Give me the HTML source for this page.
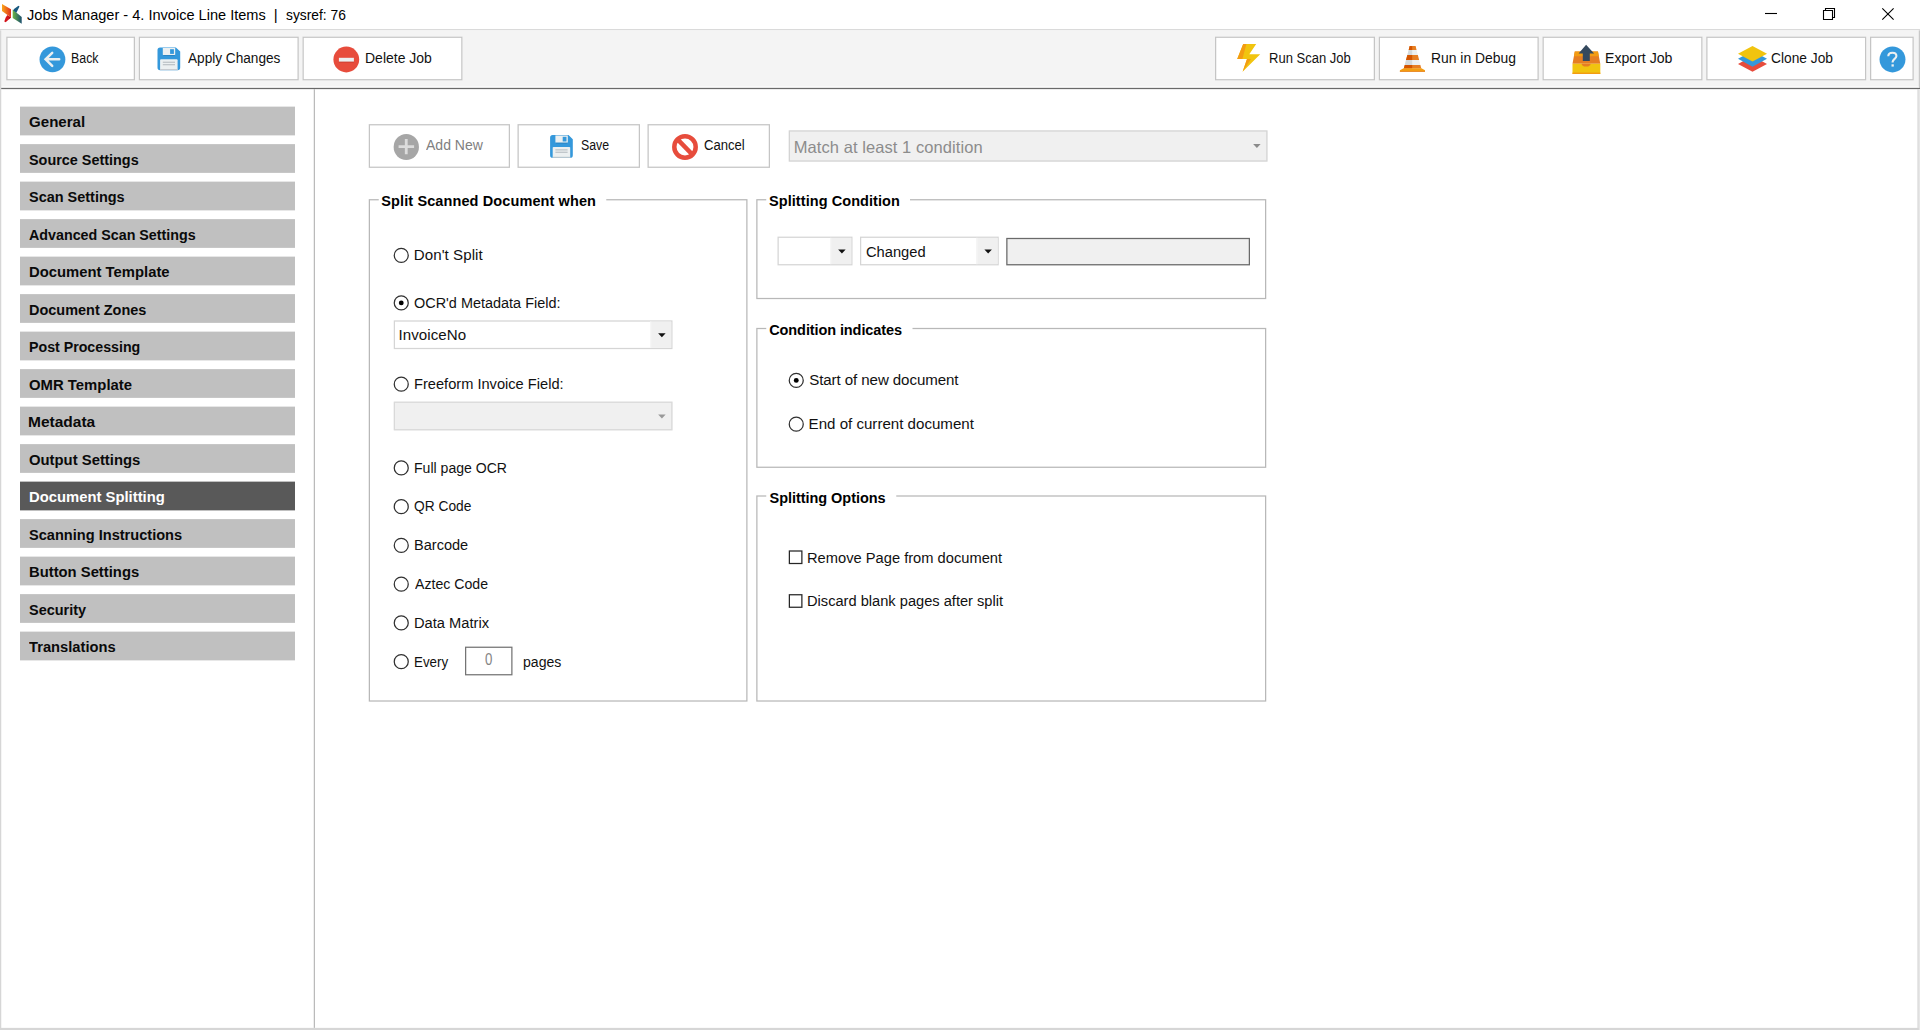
<!DOCTYPE html>
<html lang="en">
<head>
<meta charset="utf-8">
<title>Jobs Manager - 4. Invoice Line Items | sysref: 76</title>
<style>
html,body{margin:0;padding:0;}
body{width:1920px;height:1030px;position:relative;overflow:hidden;background:#fff;font-family:"Liberation Sans",sans-serif;}
#client{position:absolute;left:0;top:0;width:1536px;height:800px;transform:translate(0px,30.375px) scale(1.25);transform-origin:0 0;background:#fff;}
.a{position:absolute;box-sizing:border-box;}
.t{position:absolute;white-space:pre;display:block;transform-origin:0 50%;}
.btn{position:absolute;box-sizing:border-box;background:#fff;border:1px solid #c5c5c5;}
.gb{position:absolute;box-sizing:border-box;border:1px solid #b8b8b8;}
svg{position:absolute;overflow:visible;}
</style>
</head>
<body>
<div class="a" style="left:0;top:29px;width:1920px;height:2px;background:#dadada"></div>
<div id="client">
<div class="a" style="left:0px;top:0px;width:1535px;height:45px;background:#f4f4f4"></div>
<div class="a" style="left:1535px;top:0px;width:1px;height:46px;background:#c8c8c8"></div>
<div class="a" style="left:0px;top:45px;width:1535px;height:1px;background:#fafafa"></div>
<div class="a" style="left:0px;top:46px;width:1536px;height:1px;background:#696969"></div>
<div class="a" style="left:0px;top:0px;width:1px;height:800px;background:#d6d6d6"></div>
<div class="a" style="left:1534px;top:47px;width:1px;height:753px;background:#d2d2d2"></div>
<div class="a" style="left:1535px;top:47px;width:1px;height:753px;background:#e6e6e6"></div>
<div class="a" style="left:0px;top:798px;width:1535px;height:2px;background:#d6d6d6"></div>
<div class="a" style="left:251px;top:47px;width:1px;height:751px;background:#bababa"></div>
<div class="btn" style="left:5px;top:5px;width:103px;height:35px;"></div>
<div class="btn" style="left:111px;top:5px;width:128px;height:35px;"></div>
<div class="btn" style="left:242px;top:5px;width:128px;height:35px;"></div>
<div class="btn" style="left:972px;top:5px;width:128px;height:35px;"></div>
<div class="btn" style="left:1103px;top:5px;width:128px;height:35px;"></div>
<div class="btn" style="left:1234px;top:5px;width:128px;height:35px;"></div>
<div class="btn" style="left:1365px;top:5px;width:128px;height:35px;"></div>
<div class="btn" style="left:1496px;top:5px;width:35px;height:35px;"></div>
<div class="a" style="left:16px;top:61px;width:220px;height:23px;background:#c0c0c0"></div>
<div class="a" style="left:16px;top:91px;width:220px;height:23px;background:#c0c0c0"></div>
<div class="a" style="left:16px;top:121px;width:220px;height:23px;background:#c0c0c0"></div>
<div class="a" style="left:16px;top:151px;width:220px;height:23px;background:#c0c0c0"></div>
<div class="a" style="left:16px;top:181px;width:220px;height:23px;background:#c0c0c0"></div>
<div class="a" style="left:16px;top:211px;width:220px;height:23px;background:#c0c0c0"></div>
<div class="a" style="left:16px;top:241px;width:220px;height:23px;background:#c0c0c0"></div>
<div class="a" style="left:16px;top:271px;width:220px;height:23px;background:#c0c0c0"></div>
<div class="a" style="left:16px;top:301px;width:220px;height:23px;background:#c0c0c0"></div>
<div class="a" style="left:16px;top:331px;width:220px;height:23px;background:#c0c0c0"></div>
<div class="a" style="left:16px;top:361px;width:220px;height:23px;background:#595959"></div>
<div class="a" style="left:16px;top:391px;width:220px;height:23px;background:#c0c0c0"></div>
<div class="a" style="left:16px;top:421px;width:220px;height:23px;background:#c0c0c0"></div>
<div class="a" style="left:16px;top:451px;width:220px;height:23px;background:#c0c0c0"></div>
<div class="a" style="left:16px;top:481px;width:220px;height:23px;background:#c0c0c0"></div>
<div class="btn" style="left:295px;top:75px;width:113px;height:35px;"></div>
<div class="btn" style="left:414px;top:75px;width:98px;height:35px;"></div>
<div class="btn" style="left:518px;top:75px;width:98px;height:35px;"></div>
<div class="a" style="left:631px;top:80px;width:383px;height:25px;background:#f0f0f0;border:1px solid #d4d4d4"></div>
<div class="gb" style="left:295px;top:135px;width:303px;height:402px;"></div>
<div class="a" style="left:303px;top:134px;width:182px;height:3px;background:#fff"></div>
<div class="gb" style="left:605px;top:135px;width:408px;height:80px;"></div>
<div class="a" style="left:613px;top:134px;width:115px;height:3px;background:#fff"></div>
<div class="gb" style="left:605px;top:238px;width:408px;height:112px;"></div>
<div class="a" style="left:613px;top:237px;width:117px;height:3px;background:#fff"></div>
<div class="gb" style="left:605px;top:372px;width:408px;height:165px;"></div>
<div class="a" style="left:613px;top:371px;width:104px;height:3px;background:#fff"></div>
<div class="a" style="left:315px;top:232px;width:223px;height:23px;background:#fff;border:1px solid #d5d5d5"></div>
<div class="a" style="left:520px;top:233px;width:17px;height:21px;background:#f0f0f0;border-left:1px solid #f6f6f6"></div>
<div class="a" style="left:315px;top:297px;width:223px;height:23px;background:#f0f0f0;border:1px solid #d9d9d9"></div>
<div class="a" style="left:622px;top:165px;width:60px;height:23px;background:#fff;border:1px solid #d5d5d5"></div>
<div class="a" style="left:664px;top:166px;width:17px;height:21px;background:#f0f0f0;border-left:1px solid #f6f6f6"></div>
<div class="a" style="left:688px;top:165px;width:111px;height:23px;background:#fff;border:1px solid #d5d5d5"></div>
<div class="a" style="left:781px;top:166px;width:17px;height:21px;background:#f0f0f0;border-left:1px solid #f6f6f6"></div>
<div class="a" style="left:805px;top:166px;width:195px;height:22px;background:#f0f0f0;border:1px solid #6a6a6a"></div>
<div class="a" style="left:372px;top:493px;width:38px;height:23px;background:#fff;border:1px solid #747474"></div>
<svg style="left:0;top:0" width="1536" height="800" viewBox="0 0 1536 800" fill="#fff" stroke="#303030" stroke-width="1"><circle cx="321" cy="180" r="5.6"/><circle cx="321" cy="218" r="5.6"/><circle cx="321" cy="283" r="5.6"/><circle cx="321" cy="350" r="5.6"/><circle cx="321" cy="381" r="5.6"/><circle cx="321" cy="412" r="5.6"/><circle cx="321" cy="443" r="5.6"/><circle cx="321" cy="474" r="5.6"/><circle cx="321" cy="505" r="5.6"/><circle cx="637" cy="280" r="5.6"/><circle cx="637" cy="315" r="5.6"/><circle cx="321" cy="218" r="1.950" fill="#000" stroke="none"/><circle cx="637" cy="280" r="1.950" fill="#000" stroke="none"/><rect x="631.5" y="416.5" width="10" height="10" stroke="#262626"/><rect x="631.5" y="451.5" width="10" height="10" stroke="#262626"/><polygon points="526.5,242.2 532.5,242.2 529.5,245.4" fill="#111" stroke="none"/><polygon points="526.5,307.2 532.5,307.2 529.5,310.4" fill="#999" stroke="none"/><polygon points="670.5,175.2 676.5,175.2 673.5,178.4" fill="#111" stroke="none"/><polygon points="787.5,175.2 793.5,175.2 790.5,178.4" fill="#111" stroke="none"/><polygon points="1002.5,90.8 1008.5,90.8 1005.5,94.0" fill="#8b8b8b" stroke="none"/></svg>
</div>

<!-- app logo -->
<svg style="left:0;top:0" width="30" height="30" viewBox="0 0 30 30">
<defs>
<linearGradient id="lg1" x1="0" y1="0" x2="1" y2="0"><stop offset="0" stop-color="#faa61a"/><stop offset="1" stop-color="#e0301e"/></linearGradient>
<linearGradient id="lg2" x1="0" y1="0" x2="1" y2="0"><stop offset="0" stop-color="#6db544"/><stop offset="1" stop-color="#1b4f6e"/></linearGradient>
</defs>
<polygon points="7.300,15 11,17.500 5.700,22.200 4.300,21.600 5.600,17.800" fill="#d3131b"/>
<polygon points="8.600,16 11,17.500 9.400,18.900" fill="#a50f15"/>
<polygon points="2,4 11,9.300 11,17.600 2,10.900" fill="url(#lg1)"/>
<polygon points="12.7,9.6 21.7,17.1 21.7,23.8 12.7,18.1" fill="url(#lg2)"/>
<polygon points="18.5,5.7 19.5,6.4 16.4,12.8 13.2,10.5 14,8.9" fill="#17587f"/>
</svg>

<!-- caption buttons -->
<svg style="left:1740px;top:0" width="180" height="29" viewBox="1740 0 180 29" fill="none" stroke="#000" stroke-width="1.1">
<path d="M1765 13.5H1777"/>
<path d="M1823.5 10.5h9v9h-9zM1825.5 10.5v-2h9v9h-2"/>
<path d="M1882.300 8.300L1893.600 19.600M1893.600 8.300L1882.300 19.600"/>
</svg>

<!-- toolbar icons -->
<!-- back -->
<svg style="left:38px;top:44px" width="30" height="30" viewBox="38 44 30 30">
<circle cx="52.45" cy="59.45" r="12.9" fill="#3498db"/>
<path d="M59.200 59.350H46.200M52.200 52.900L45.600 59.350L52.200 65.800" fill="none" stroke="#ecf0f1" stroke-width="2.500" stroke-linecap="round" stroke-linejoin="miter"/>
</svg>
<!-- floppy (apply) -->
<svg style="left:157px;top:47px" width="24" height="24" viewBox="0 0 24 24"><use href="#floppy" x="0.500" y="0.500"/></svg>
<!-- delete -->
<svg style="left:331px;top:44px" width="30" height="30" viewBox="331 44 30 30">
<circle cx="346.300" cy="59.500" r="12.900" fill="#e74c3c"/>
<rect x="338.900" y="61.300" width="15" height="1.100" fill="#c0392b"/>
<rect x="338.900" y="57.800" width="15" height="3.800" fill="#ecf0f1"/>
</svg>
<!-- lightning -->
<svg style="left:1235px;top:42px" width="28" height="32" viewBox="1235 42 28 32">
<polygon points="1243.200,44 1256.200,44 1249.300,54.200 1260.200,54.200 1242.600,71.700 1247,59 1237.200,59" fill="#f1c40f"/>
<polygon points="1243.200,44 1246.400,44 1242.400,59 1237.200,59" fill="#f39c12"/>
<polygon points="1247,59 1251,59 1242.600,71.700" fill="#f39c12"/>
</svg>
<!-- cone -->
<svg style="left:1398px;top:44px" width="30" height="30" viewBox="1398 44 30 30">
<polygon points="1409.70,46.10 1415.60,46.10 1416.59,50.00 1408.68,50.00" fill="#e67e22"/>
<polygon points="1409.70,46.10 1412.20,46.10 1412.20,50.00 1408.68,50.00" fill="#d35400"/>
<polygon points="1408.68,50.00 1416.59,50.00 1417.85,55.00 1407.37,55.00" fill="#ecf0f1"/>
<polygon points="1408.68,50.00 1412.20,50.00 1412.20,55.00 1407.37,55.00" fill="#d3d9db"/>
<polygon points="1407.37,55.00 1417.85,55.00 1419.15,60.10 1406.03,60.10" fill="#e67e22"/>
<polygon points="1407.37,55.00 1412.20,55.00 1412.20,60.10 1406.03,60.10" fill="#d35400"/>
<polygon points="1406.03,60.10 1419.15,60.10 1420.36,64.90 1404.77,64.90" fill="#ecf0f1"/>
<polygon points="1406.03,60.10 1412.20,60.10 1412.20,64.90 1404.77,64.90" fill="#d3d9db"/>
<polygon points="1404.77,64.90 1420.36,64.90 1421.30,68.60 1403.80,68.60" fill="#e67e22"/>
<polygon points="1404.77,64.90 1412.20,64.90 1412.20,68.60 1403.80,68.60" fill="#d35400"/>
<polygon points="1403.700,68.300 1421.400,68.300 1425,70.300 1425,71.800 1399.900,71.800 1399.900,70.300" fill="#f39c12"/>
<rect x="1399.900" y="71.200" width="25.100" height="0.700" fill="#e67e22"/>
</svg>
<!-- export -->
<svg style="left:1570px;top:43px" width="32" height="32" viewBox="1570 43 32 32">
<polygon points="1574.8,51.6 1598,51.6 1600.3,63.8 1572.5,63.8" fill="#e67e22"/>
<polygon points="1574.8,51.6 1598,51.6 1598.8,56.2 1574,56.2" fill="#f39c12"/>
<rect x="1572.5" y="63.8" width="27.8" height="10.2" fill="#f1c40f"/>
<rect x="1572.5" y="72.6" width="27.8" height="1.4" fill="#f39c12"/>
<path d="M1581.8 63.8h8.6v1.2l-2.2 1.4h-4.2l-2.2-1.4z" fill="#e67e22"/>
<polygon points="1586.1,44.8 1594.1,53.5 1589.8,53.5 1589.8,61 1582.8,61 1582.8,53.5 1578.6,53.5" fill="#34495e"/>
</svg>
<!-- clone layers -->
<svg style="left:1736px;top:44px" width="34" height="30" viewBox="1736 44 34 30">
<polygon points="1752.500,56.05 1767,63.90 1752.500,71.75 1738,63.90" fill="#e74c3c"/>
<polygon points="1752.500,50.95 1767,58.80 1752.500,66.65 1738,58.80" fill="#3498db"/>
<polygon points="1752.500,45.90 1767,53.75 1752.500,61.60 1738,53.75" fill="#f1c40f"/>
</svg>
<!-- help -->
<svg style="left:1878px;top:44px" width="30" height="30" viewBox="1878 44 30 30">
<circle cx="1892.500" cy="59.450" r="12.950" fill="#3498db"/>
<path d="M1888.300 56.200c0-2.200 1.700-3.500 4.100-3.500s4 1.400 4 3.300c0 2.600-3.800 3.200-3.800 6.100v0.500" fill="none" stroke="#ecf0f1" stroke-width="2.100"/>
<rect x="1891.500" y="64.300" width="2.300" height="2.300" fill="#ecf0f1"/>
</svg>

<!-- add new icon -->
<svg style="left:392px;top:132px" width="30" height="30" viewBox="392 132 30 30">
<ellipse cx="406.300" cy="147" rx="12.650" ry="13" fill="#a6a6a6"/>
<path d="M398.600 146.600h15.500M406.250 138.900v15.400" stroke="#dcdcdc" stroke-width="2.800" fill="none"/>
</svg>
<!-- save floppy -->
<svg style="left:550px;top:135px" width="24" height="24" viewBox="0 0 24 24"><use href="#floppy" x="0.100" y="0.100"/></svg>
<!-- cancel -->
<svg style="left:670px;top:132px" width="30" height="30" viewBox="670 132 30 30">
<circle cx="685" cy="147" r="10.700" fill="none" stroke="#e74c3c" stroke-width="4.500"/>
<path d="M677.600 139.400L692.400 154.600" stroke="#e74c3c" stroke-width="4.400"/>
</svg>
<svg width="0" height="0" style="left:0;top:0"><defs>
<g id="floppy">
<path d="M2.6 0H18.4L22.7 4.1V20.100a2.600 2.600 0 0 1-2.600 2.600H2.600A2.600 2.600 0 0 1 0 20.100V2.600A2.600 2.600 0 0 1 2.600 0z" fill="#3498db"/>
<path d="M5.300 0.400H17.700V6.900a0.700 0.700 0 0 1-0.700 0.700H6a0.700 0.700 0 0 1-0.700-0.700z" fill="#ecf0f1"/>
<path d="M5.900 7.600H17.100V8.500H5.900z" fill="#2b83c0"/>
<rect x="12.600" y="1.700" width="3.800" height="4.700" fill="#3498db"/>
<path d="M3.500 11.800H19.200a0.900 0.900 0 0 1 0.900 0.900V22.500H2.600V12.700a0.900 0.900 0 0 1 0.900-0.900z" fill="#ecf0f1"/>
<rect x="2.600" y="21.700" width="17.500" height="0.900" fill="#bdc3c7"/>
<rect x="5.300" y="14.150" width="12.200" height="1.250" fill="#bdc3c7"/>
<rect x="5.300" y="16.550" width="12.200" height="1.250" fill="#bdc3c7"/>
</g></defs></svg>

<!-- title text -->
<span class="t" id="t0" style="left:27.15px;top:4px;font-size:15px;line-height:21px;color:#000;transform:scaleX(0.9708);">Jobs Manager - 4. Invoice Line Items</span>
<span class="t" id="t1" style="left:273.70px;top:4px;font-size:15px;line-height:21px;color:#000;">|</span>
<span class="t" id="t2" style="left:285.82px;top:4px;font-size:15px;line-height:21px;color:#000;transform:scaleX(0.9208);">sysref: 76</span>
<span class="t" id="t3" style="left:71.31px;top:47px;font-size:15.1px;line-height:21px;color:#111;transform:scaleX(0.8212);">Back</span>
<span class="t" id="t4" style="left:188.30px;top:47px;font-size:15.1px;line-height:21px;color:#111;transform:scaleX(0.9023);">Apply Changes</span>
<span class="t" id="t5" style="left:365.08px;top:47px;font-size:15.1px;line-height:21px;color:#111;transform:scaleX(0.9271);">Delete Job</span>
<span class="t" id="t6" style="left:1268.76px;top:47px;font-size:15.1px;line-height:21px;color:#111;transform:scaleX(0.8625);">Run Scan Job</span>
<span class="t" id="t7" style="left:1430.89px;top:47px;font-size:15.1px;line-height:21px;color:#111;transform:scaleX(0.9204);">Run in Debug</span>
<span class="t" id="t8" style="left:1604.77px;top:47px;font-size:15.1px;line-height:21px;color:#111;transform:scaleX(0.9343);">Export Job</span>
<span class="t" id="t9" style="left:1771.21px;top:47px;font-size:15.1px;line-height:21px;color:#111;transform:scaleX(0.9116);">Clone Job</span>
<span class="t" id="t10" style="left:28.80px;top:113px;font-size:13.9px;line-height:19px;color:#0a0a0a;font-weight:700;transform:scaleX(1.0862);">General</span>
<span class="t" id="t11" style="left:29.11px;top:151px;font-size:13.9px;line-height:19px;color:#0a0a0a;font-weight:700;transform:scaleX(1.0368);">Source Settings</span>
<span class="t" id="t12" style="left:29.11px;top:188px;font-size:13.9px;line-height:19px;color:#0a0a0a;font-weight:700;transform:scaleX(1.0413);">Scan Settings</span>
<span class="t" id="t13" style="left:29.11px;top:226px;font-size:13.9px;line-height:19px;color:#0a0a0a;font-weight:700;transform:scaleX(1.0283);">Advanced Scan Settings</span>
<span class="t" id="t14" style="left:28.51px;top:263px;font-size:13.9px;line-height:19px;color:#0a0a0a;font-weight:700;transform:scaleX(1.0673);">Document Template</span>
<span class="t" id="t15" style="left:28.53px;top:301px;font-size:13.9px;line-height:19px;color:#0a0a0a;font-weight:700;transform:scaleX(1.0411);">Document Zones</span>
<span class="t" id="t16" style="left:28.55px;top:338px;font-size:13.9px;line-height:19px;color:#0a0a0a;font-weight:700;transform:scaleX(1.0220);">Post Processing</span>
<span class="t" id="t17" style="left:28.80px;top:376px;font-size:13.9px;line-height:19px;color:#0a0a0a;font-weight:700;transform:scaleX(1.0707);">OMR Template</span>
<span class="t" id="t18" style="left:28.47px;top:413px;font-size:13.9px;line-height:19px;color:#0a0a0a;font-weight:700;transform:scaleX(1.1156);">Metadata</span>
<span class="t" id="t19" style="left:28.81px;top:451px;font-size:13.9px;line-height:19px;color:#0a0a0a;font-weight:700;transform:scaleX(1.0681);">Output Settings</span>
<span class="t" id="t20" style="left:28.51px;top:488px;font-size:13.9px;line-height:19px;color:#fff;font-weight:700;transform:scaleX(1.0666);">Document Splitting</span>
<span class="t" id="t21" style="left:29.11px;top:526px;font-size:13.9px;line-height:19px;color:#0a0a0a;font-weight:700;transform:scaleX(1.0497);">Scanning Instructions</span>
<span class="t" id="t22" style="left:28.51px;top:563px;font-size:13.9px;line-height:19px;color:#0a0a0a;font-weight:700;transform:scaleX(1.0653);">Button Settings</span>
<span class="t" id="t23" style="left:29.11px;top:601px;font-size:13.9px;line-height:19px;color:#0a0a0a;font-weight:700;transform:scaleX(1.0416);">Security</span>
<span class="t" id="t24" style="left:29.25px;top:638px;font-size:13.9px;line-height:19px;color:#0a0a0a;font-weight:700;transform:scaleX(1.0586);">Translations</span>
<span class="t" id="t25" style="left:425.60px;top:134px;font-size:15.1px;line-height:21px;color:#808080;transform:scaleX(0.9285);">Add New</span>
<span class="t" id="t26" style="left:580.51px;top:134px;font-size:15.1px;line-height:21px;color:#111;transform:scaleX(0.8176);">Save</span>
<span class="t" id="t27" style="left:703.95px;top:134px;font-size:15.1px;line-height:21px;color:#111;transform:scaleX(0.8674);">Cancel</span>
<span class="t" id="t28" style="left:793.68px;top:136px;font-size:16.5px;line-height:23px;color:#8c8c8c;letter-spacing:0.074px;">Match at least 1 condition</span>
<span class="t" id="t29" style="left:381.31px;top:191px;font-size:14.5px;line-height:20px;color:#000;font-weight:700;letter-spacing:0.107px;">Split Scanned Document when</span>
<span class="t" id="t30" style="left:769.01px;top:191px;font-size:14.5px;line-height:20px;color:#000;font-weight:700;letter-spacing:0.067px;">Splitting Condition</span>
<span class="t" id="t31" style="left:769.22px;top:320px;font-size:14.5px;line-height:20px;color:#000;font-weight:700;letter-spacing:-0.096px;">Condition indicates</span>
<span class="t" id="t32" style="left:769.51px;top:488px;font-size:14.5px;line-height:20px;color:#000;font-weight:700;letter-spacing:-0.042px;">Splitting Options</span>
<span class="t" id="t33" style="left:413.79px;top:244px;font-size:15.1px;line-height:21px;color:#111;letter-spacing:0.063px;">Don't Split</span>
<span class="t" id="t34" style="left:414.22px;top:292px;font-size:15.1px;line-height:21px;color:#111;transform:scaleX(0.9571);">OCR'd Metadata Field:</span>
<span class="t" id="t35" style="left:398.44px;top:324px;font-size:15.1px;line-height:21px;color:#111;letter-spacing:0.070px;">InvoiceNo</span>
<span class="t" id="t36" style="left:413.63px;top:373px;font-size:15.1px;line-height:21px;color:#111;transform:scaleX(0.9692);">Freeform Invoice Field:</span>
<span class="t" id="t37" style="left:413.67px;top:457px;font-size:15.1px;line-height:21px;color:#111;transform:scaleX(0.9314);">Full page OCR</span>
<span class="t" id="t38" style="left:414.25px;top:495px;font-size:15.1px;line-height:21px;color:#111;transform:scaleX(0.9111);">QR Code</span>
<span class="t" id="t39" style="left:413.64px;top:534px;font-size:15.1px;line-height:21px;color:#111;transform:scaleX(0.9635);">Barcode</span>
<span class="t" id="t40" style="left:414.80px;top:573px;font-size:15.1px;line-height:21px;color:#111;transform:scaleX(0.9353);">Aztec Code</span>
<span class="t" id="t41" style="left:414.02px;top:612px;font-size:15.1px;line-height:21px;color:#111;transform:scaleX(0.9731);">Data Matrix</span>
<span class="t" id="t42" style="left:414.13px;top:651px;font-size:15.1px;line-height:21px;color:#111;transform:scaleX(0.8853);">Every</span>
<span class="t" id="t43" style="left:485.40px;top:648px;font-size:16.5px;line-height:23px;color:#858585;transform:scaleX(0.8040);">0</span>
<span class="t" id="t44" style="left:522.86px;top:651px;font-size:15.1px;line-height:21px;color:#111;transform:scaleX(0.9326);">pages</span>
<span class="t" id="t45" style="left:865.67px;top:241px;font-size:15.1px;line-height:21px;color:#111;transform:scaleX(0.9734);">Changed</span>
<span class="t" id="t46" style="left:809.20px;top:369px;font-size:15.1px;line-height:21px;color:#111;letter-spacing:-0.085px;">Start of new document</span>
<span class="t" id="t47" style="left:808.59px;top:413px;font-size:15.1px;line-height:21px;color:#111;letter-spacing:0.001px;">End of current document</span>
<span class="t" id="t48" style="left:807.42px;top:547px;font-size:15.1px;line-height:21px;color:#111;transform:scaleX(0.9728);">Remove Page from document</span>
<span class="t" id="t49" style="left:807.43px;top:590px;font-size:15.1px;line-height:21px;color:#111;transform:scaleX(0.9697);">Discard blank pages after split</span>
</body>
</html>
